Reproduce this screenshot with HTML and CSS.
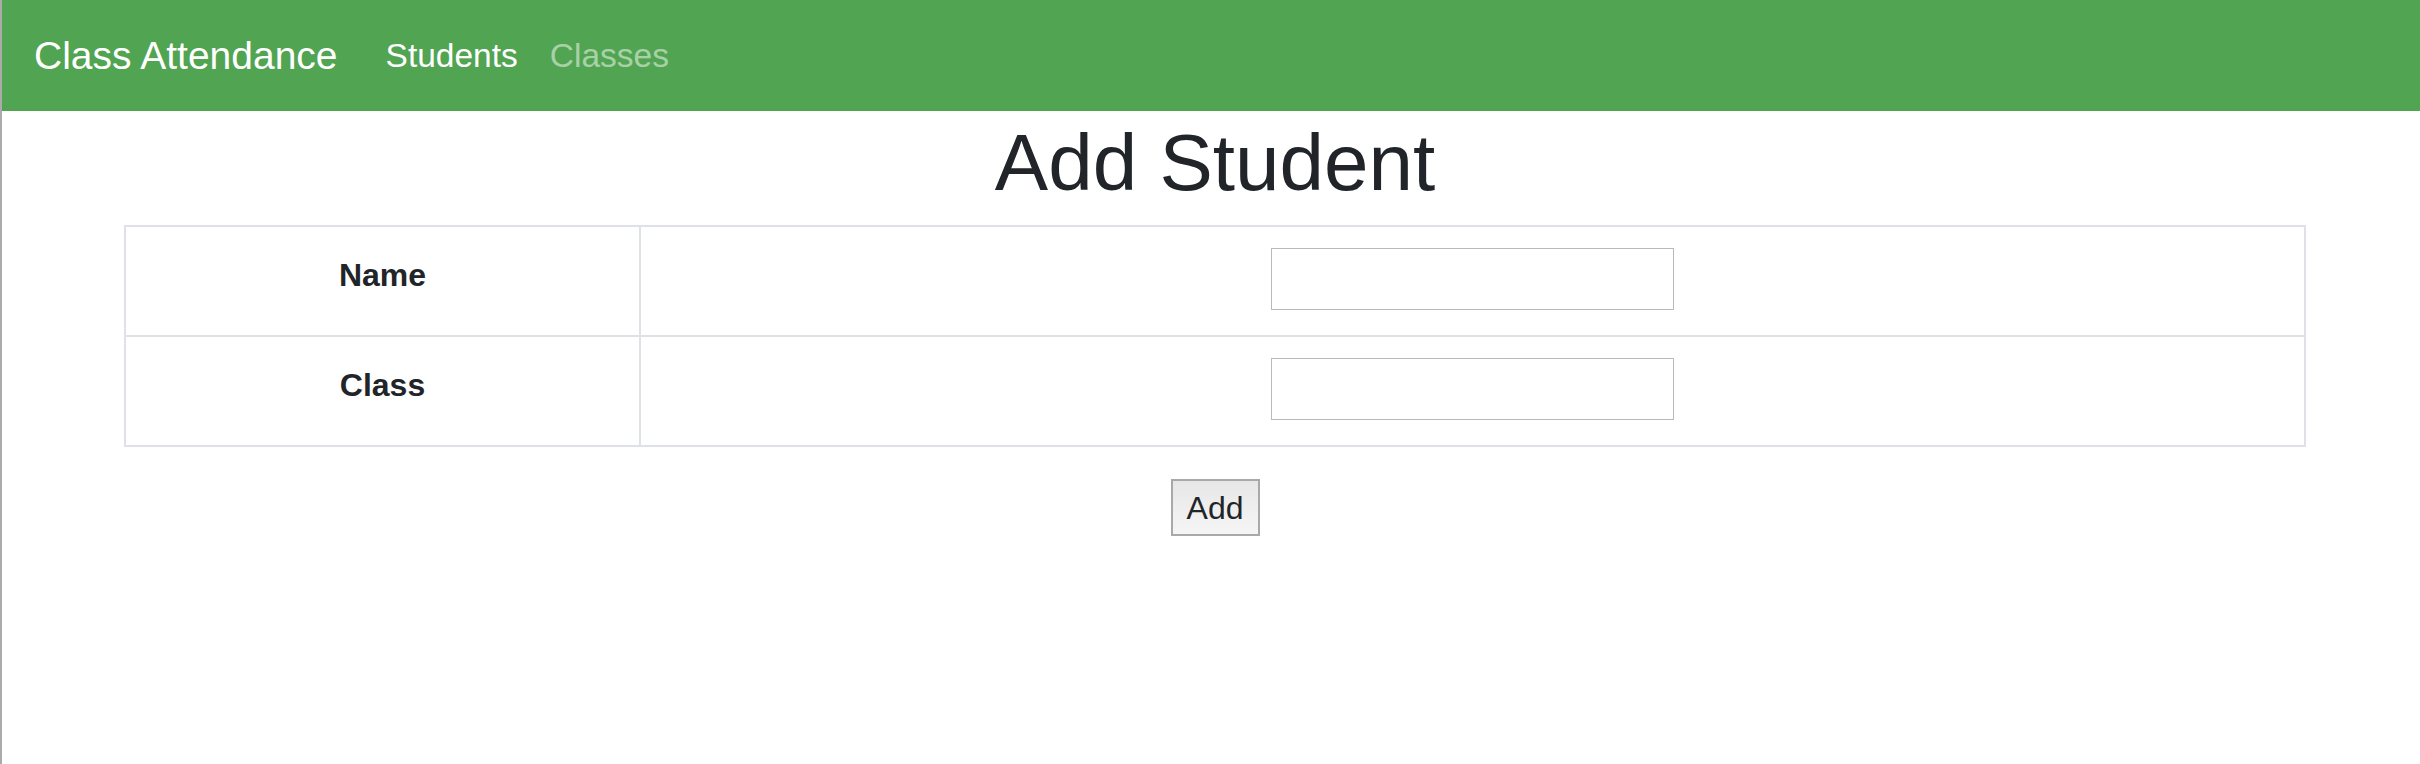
FILE: index.html
```html
<!DOCTYPE html>
<html lang="en">
<head>
<meta charset="utf-8">
<title>Class Attendance</title>
<link rel="stylesheet" href="styles.css">
</head>
<body>
<nav class="navbar">
  <a class="brand" href="#">Class Attendance</a>
  <a class="nav-link active" href="#">Students</a>
  <a class="nav-link" href="#">Classes</a>
</nav>
<main class="content">
  <h1 class="title">Add Student</h1>
  <form class="form">
    <table class="form-table">
      <tr>
        <th class="label">Name</th>
        <td class="field"><input class="text-input" type="text"></td>
      </tr>
      <tr>
        <th class="label">Class</th>
        <td class="field"><input class="text-input" type="text"></td>
      </tr>
    </table>
    <div class="actions">
      <button class="btn" type="button">Add</button>
    </div>
  </form>
</main>
</body>
</html>
```

FILE: styles.css
```css
* { box-sizing: border-box; }

html, body {
  margin: 0;
  padding: 0;
}

body {
  min-height: 100vh;
  border-left: 2px solid #ababab;
  background: #ffffff;
  color: #212529;
  font-family: "Liberation Sans", Arial, Helvetica, sans-serif;
}

.navbar {
  display: flex;
  align-items: center;
  height: 111px;
  padding: 0 32px;
  background: #51a451;
}

.brand {
  font-size: 39px;
  line-height: 1;
  color: #ffffff;
  text-decoration: none;
  margin-right: 32px;
}

.nav-link {
  font-size: 33.5px;
  line-height: 1;
  padding: 0 16px;
  color: rgba(255, 255, 255, 0.5);
  text-decoration: none;
}

.nav-link.active {
  color: #ffffff;
}

.content {
  padding: 0 114px 0 122px;
}

.title {
  margin: 0 0 14px;
  padding-top: 4px;
  font-size: 80px;
  line-height: 96px;
  font-weight: 500;
  text-align: center;
}

.form {
  margin: 0;
}

.form-table {
  width: 100%;
  border-collapse: collapse;
  border: 2px solid #dee2e6;
}

.label {
  width: 515px;
  padding: 24px;
  font-size: 32px;
  line-height: 48px;
  font-weight: 700;
  text-align: center;
  vertical-align: top;
  border: 2px solid #dee2e6;
}

.field {
  padding: 21px 24px 25px;
  vertical-align: top;
  text-align: center;
  border: 2px solid #dee2e6;
}

.text-input {
  display: block;
  margin: 0 auto;
  width: 403px;
  height: 62px;
  border: 1px solid #b9b9b9;
  font-size: 32px;
  font-family: inherit;
  background: #ffffff;
}

.actions {
  margin-top: 32px;
  text-align: center;
}

.btn {
  width: 89px;
  height: 57px;
  padding: 0;
  border: 2px solid #a9a9a9;
  background: linear-gradient(#e7e7e7, #f5f5f5);
  color: #212529;
  font-family: inherit;
  font-size: 32px;
  line-height: 1;
}
```
